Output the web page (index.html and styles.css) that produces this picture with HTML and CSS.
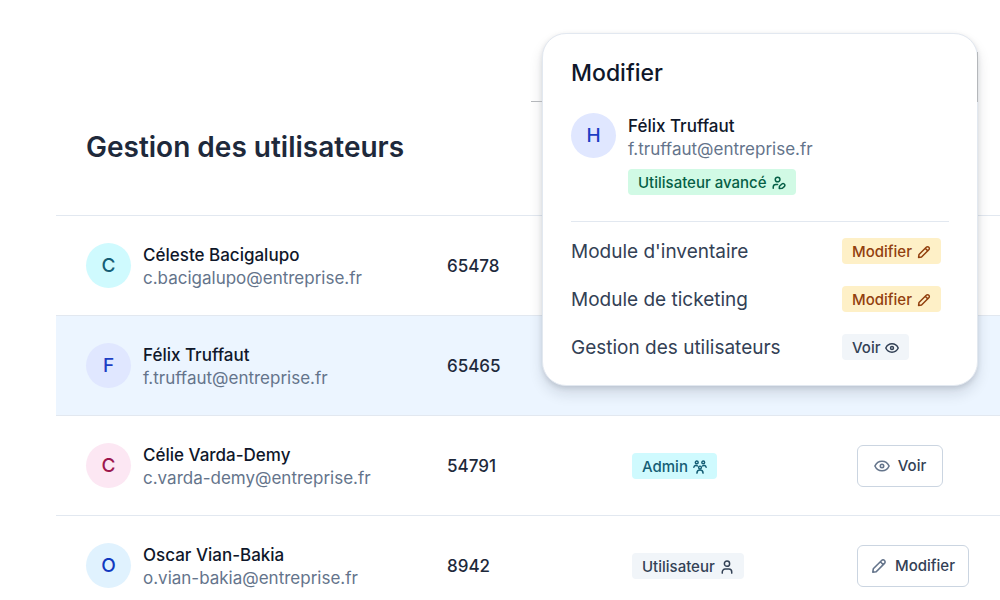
FILE: index.html
```html
<!DOCTYPE html>
<html lang="fr">
<head>
<meta charset="utf-8">
<meta name="viewport" content="width=device-width, initial-scale=1">
<title>Gestion des utilisateurs</title>
<link rel="stylesheet" href="styles.css">
</head>
<body>
<svg class="sprite" aria-hidden="true">
  <symbol id="pencil" viewBox="0 0 16 16"><path d="M1.800 14.200 2.300 10.800 10.600 2.500a2.050 2.050 0 0 1 2.900 2.900L5.200 13.700ZM9.400 3.800l2.900 2.900"/></symbol>
  <symbol id="eye" viewBox="0 0 16 16"><path d="M.9 8C2.3 5 4.9 3.2 8 3.2S13.700 5 15.100 8C13.700 11 11.100 12.800 8 12.800S2.300 11 .9 8Z"/><circle cx="8" cy="8" r="1.700"/></symbol>
  <symbol id="user" viewBox="0 0 16 16"><circle cx="8" cy="4.200" r="3"/><path d="M2.600 15v-1.400a3.200 3.200 0 0 1 3.200-3.200h4.400a3.200 3.200 0 0 1 3.200 3.200v1.400"/></symbol>
  <symbol id="user-edit" viewBox="0 0 16 16"><circle cx="6.400" cy="4" r="2.700"/><path d="M1.400 14v-1.300a3 3 0 0 1 3-3h2M8.300 14.200l.2-2.500 2.800-2.500a2 2 0 0 1 3 2.600l-2.500 2.200Z"/></symbol>
  <symbol id="group" viewBox="0 0 16 16"><circle cx="4.300" cy="2.800" r="1.600"/><circle cx="11.700" cy="2.800" r="1.600"/><circle cx="8" cy="8.600" r="1.600"/><path d="M1 8.300a2.500 2.500 0 0 1 4-1.600M15 8.300a2.500 2.500 0 0 0-4-1.600M4.500 15a3.500 3.500 0 0 1 7 0"/></symbol>
</svg>
<main class="page">
  <h1 class="title">Gestion des utilisateurs</h1>
  <table class="users">
    <colgroup><col class="col-user"><col class="col-id"><col class="col-role"><col></colgroup>
    <tbody>
      <tr>
        <td><div class="person"><span class="avatar cyan">C</span><div class="identity"><div class="name">Céleste Bacigalupo</div><div class="mail">c.bacigalupo@entreprise.fr</div></div></div></td>
        <td class="number">65478</td><td></td><td></td>
      </tr>
      <tr class="selected">
        <td><div class="person"><span class="avatar indigo">F</span><div class="identity"><div class="name">Félix Truffaut</div><div class="mail">f.truffaut@entreprise.fr</div></div></div></td>
        <td class="number">65465</td><td></td><td></td>
      </tr>
      <tr>
        <td><div class="person"><span class="avatar pink">C</span><div class="identity"><div class="name">Célie Varda-Demy</div><div class="mail">c.varda-demy@entreprise.fr</div></div></div></td>
        <td class="number">54791</td>
        <td><span class="badge cyan">Admin <svg class="icon"><use href="#group"/></svg></span></td>
        <td><button class="action" type="button"><svg class="icon"><use href="#eye"/></svg>Voir</button></td>
      </tr>
      <tr>
        <td><div class="person"><span class="avatar sky">O</span><div class="identity"><div class="name">Oscar Vian-Bakia</div><div class="mail">o.vian-bakia@entreprise.fr</div></div></div></td>
        <td class="number">8942</td>
        <td><span class="badge gray">Utilisateur <svg class="icon"><use href="#user"/></svg></span></td>
        <td><button class="action" type="button"><svg class="icon"><use href="#pencil"/></svg>Modifier</button></td>
      </tr>
    </tbody>
  </table>
  <section class="panel" aria-labelledby="panel-title">
    <h2 class="panel-title" id="panel-title">Modifier</h2>
    <div class="person profile">
      <span class="avatar indigo">H</span>
      <div class="identity">
        <div class="name">Félix Truffaut</div><div class="mail">f.truffaut@entreprise.fr</div>
        <span class="badge green">Utilisateur avancé <svg class="icon"><use href="#user-edit"/></svg></span>
      </div>
    </div>
    <ul class="modules">
      <li class="module"><span>Module d'inventaire</span><button type="button" class="badge amber">Modifier <svg class="icon"><use href="#pencil"/></svg></button></li>
      <li class="module"><span>Module de ticketing</span><button type="button" class="badge amber">Modifier <svg class="icon"><use href="#pencil"/></svg></button></li>
      <li class="module"><span>Gestion des utilisateurs</span><button type="button" class="badge gray">Voir <svg class="icon"><use href="#eye"/></svg></button></li>
    </ul>
  </section>
</main>
</body>
</html>
```
FILE: styles.css
```css
* { box-sizing: border-box; }
body { margin: 0; background: #fff; color: #0f172a; font: 400 17px/23px Inter, "Liberation Sans", sans-serif; }
.sprite { position: absolute; width: 0; height: 0; }
.page { position: relative; height: 100vh; overflow: hidden; padding: 128px 0 0 56px; }
.title { margin: 0 0 49px; padding-left: 30px; font-size: 28px; line-height: 38px; font-weight: 600; color: #1e293b; }

.users { width: 100%; table-layout: fixed; border-collapse: separate; border-spacing: 0; }
.col-user { width: 391px; }
.col-id { width: 185px; }
.col-role { width: 225px; }
.users td { height: 100px; padding: 0; border-top: 1px solid #e2e8f0; vertical-align: middle; }
.users td:first-child { padding-left: 30px; }
.selected { background: #ecf5ff; }
.users .number { padding-top: 2px; font-weight: 500; color: #1e293b; }

.person { display: flex; align-items: center; gap: 12px; }
.avatar { flex: none; display: grid; place-items: center; width: 45px; height: 45px; border-radius: 50%; font-size: 19px; font-weight: 500; }
.identity { padding-top: 2px; }
.name { font-weight: 500; }
.mail { color: #64748b; }
.cyan { background: #cffafe; color: #155e75; }
.indigo { background: #e0e7ff; color: #1d3fc4; }
.pink { background: #fce7f3; color: #9d174d; }
.sky { background: #e0f2fe; color: #1239c0; }
.gray { background: #f1f5f9; color: #334155; }
.green { background: #d1fae5; color: #065f46; }
.amber { background: #fef0c7; color: #92400e; }

.icon { flex: none; width: 14px; height: 14px; fill: none; stroke: currentColor; stroke-width: 1.7; stroke-linecap: round; stroke-linejoin: round; }
.badge { display: inline-flex; align-items: center; gap: 5px; height: 26px; padding: 2px 10px 0; border: 0; border-radius: 4px; font: 500 15px/24px Inter, "Liberation Sans", sans-serif; vertical-align: middle; }
.action { display: inline-flex; align-items: center; justify-content: center; gap: 8px; min-width: 86px; height: 42px; padding: 0 13px; border: 1px solid #cbd5e1; border-radius: 6px; background: #fff; color: #334155; font: 500 15px/24px Inter, "Liberation Sans", sans-serif; vertical-align: middle; }
.action .icon { width: 16px; height: 16px; stroke: #64748b; stroke-width: 1.6; }

.panel { position: absolute; top: 33px; right: 22px; width: 436px; padding: 24px 28px 14px; border: 1px solid #e2e8f0; border-radius: 24px; background: #fff; box-shadow: 0 8px 14px rgba(15, 23, 42, .12), 0 2px 5px rgba(15, 23, 42, .12); }
.panel::before { content: ""; position: absolute; top: 67px; left: -12px; width: 11px; border-top: 1px solid #b4b7bb; }
.panel::after { content: ""; position: absolute; top: 18px; right: -1px; height: 50px; border-right: 1px solid #b4b7bb; }
.panel-title { margin: 0 0 25px; font-size: 23px; line-height: 30px; font-weight: 500; }
.profile { align-items: flex-start; padding-bottom: 26px; border-bottom: 1px solid #e2e8f0; }
.profile .badge { display: flex; width: max-content; margin-top: 8px; }
.modules { margin: 5px 0 0; padding: 0; list-style: none; }
.module { display: grid; grid-template-columns: 1fr 107px; align-items: center; justify-items: start; height: 48px; font-size: 19px; color: #334155; }
```
